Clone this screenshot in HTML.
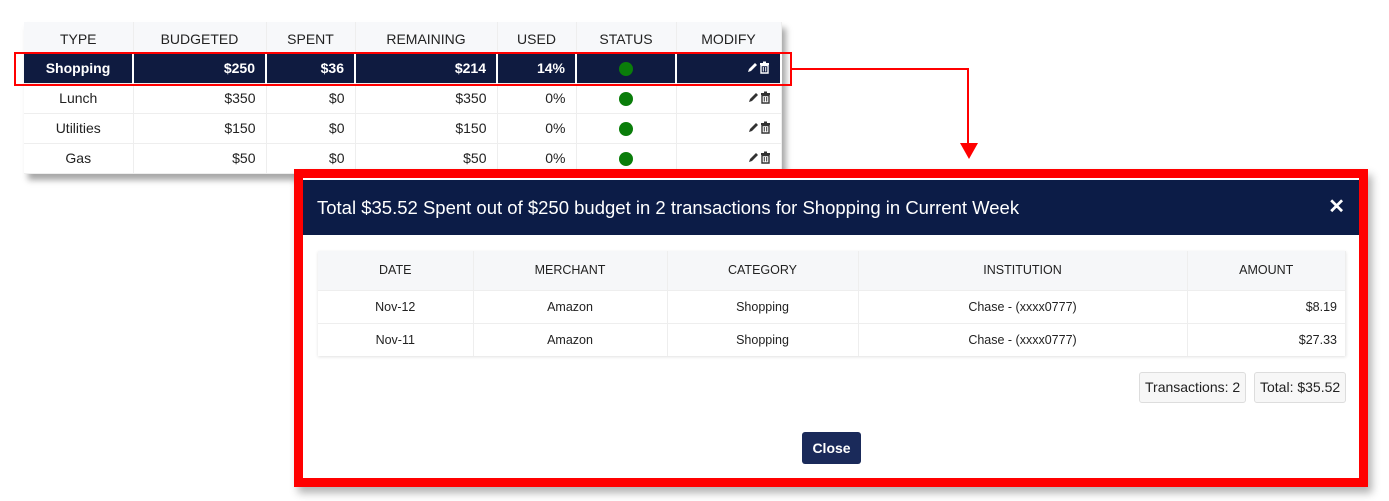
<!DOCTYPE html>
<html><head><meta charset="utf-8"><style>
*{box-sizing:border-box;margin:0;padding:0}
body{width:1389px;height:501px;background:#fff;position:relative;overflow:hidden;font-family:"Liberation Sans",sans-serif;color:#222}
.tbl{position:absolute;left:24px;top:22px;width:758px;border-collapse:collapse;box-shadow:4px 6px 6px rgba(0,0,0,.35);background:#fff;font-size:14px}
.tbl td,.tbl th{height:30px;padding:0 10px;border-right:1px solid #eee;border-bottom:1px solid #eee}
.tbl th{font-weight:normal;background:#f7f8fa;height:31px;padding-top:3px}
.tbl td.r{text-align:right}.tbl td.c,.tbl th{text-align:center}
.tbl tr.sel td{background:#0f1b40;color:#fff;font-weight:bold;border-right:2px solid #fff}
.dot{display:inline-block;width:14px;height:14px;border-radius:50%;background:#0a7d0a;vertical-align:middle}
.abs{position:absolute}
.modal{position:absolute;left:294px;top:169px;width:1074px;height:318px;border:9px solid #ff0000;background:#fff;box-shadow:4px 6px 8px rgba(0,0,0,.3)}
.mh{position:absolute;left:0;top:2px;right:0;height:55px;background:#0c1c47;color:#fff;font-size:18.5px;padding:17px 0 0 14px}
.mh .x{position:absolute;right:14px;top:14px;font-weight:bold;font-size:20px}
.mt{position:absolute;left:15px;top:73px;width:1028px;border-collapse:collapse;font-size:12.5px;box-shadow:0 1px 3px rgba(0,0,0,.12)}
.mt th{font-weight:normal;height:39px;background:#f6f7f9;border-right:1px solid #eee;text-align:center}
.mt td{height:33px;border-top:1px solid #eee;border-right:1px solid #eee;text-align:center}
.badge{position:absolute;top:194px;height:31px;border:1px solid #ddd;border-radius:3px;background:#f7f7f7;font-size:14px;padding:6px 5px}
.btn{position:absolute;left:499px;top:254px;width:59px;height:32px;background:#1a2a5a;border-radius:3px;color:#fff;font-size:14px;text-align:center;line-height:32px;font-weight:bold}
</style></head><body>
<svg width="0" height="0" style="position:absolute"><defs>
<g id="ic"><path d="M1 12 L2 9 L8 3 L10 5 L4 11 Z" fill="currentColor"/><rect x="13" y="3" width="9" height="2" fill="currentColor"/><rect x="16" y="1.5" width="3" height="2" fill="currentColor"/><path d="M14 5.5 h7 v7.5 h-7 Z" fill="none" stroke="currentColor" stroke-width="1.4"/><path d="M16.3 7v4.5M18.7 7v4.5" stroke="currentColor" stroke-width="1"/></g>
</defs></svg>
<table class="tbl">
<tr><th style="width:109px">TYPE</th><th style="width:133px">BUDGETED</th><th style="width:89px">SPENT</th><th style="width:142px">REMAINING</th><th style="width:79px">USED</th><th style="width:100px">STATUS</th><th>MODIFY</th></tr>
<tr class="sel"><td class="c">Shopping</td><td class="r">$250</td><td class="r">$36</td><td class="r">$214</td><td class="r">14%</td><td class="c"><span class="dot"></span></td><td class="r" style="color:#fff"><svg width="23" height="14"><use href="#ic"/></svg></td></tr>
<tr><td class="c">Lunch</td><td class="r">$350</td><td class="r">$0</td><td class="r">$350</td><td class="r">0%</td><td class="c"><span class="dot"></span></td><td class="r" style="color:#333"><svg width="23" height="14"><use href="#ic"/></svg></td></tr>
<tr><td class="c">Utilities</td><td class="r">$150</td><td class="r">$0</td><td class="r">$150</td><td class="r">0%</td><td class="c"><span class="dot"></span></td><td class="r" style="color:#333"><svg width="23" height="14"><use href="#ic"/></svg></td></tr>
<tr><td class="c">Gas</td><td class="r">$50</td><td class="r">$0</td><td class="r">$50</td><td class="r">0%</td><td class="c"><span class="dot"></span></td><td class="r" style="color:#333"><svg width="23" height="14"><use href="#ic"/></svg></td></tr>
</table>
<div class="abs" style="left:14px;top:52px;width:778px;height:34px;border:2px solid #f00"></div>
<div class="abs" style="left:792px;top:68px;width:177px;height:2px;background:#f00"></div>
<div class="abs" style="left:967px;top:68px;width:2px;height:78px;background:#f00"></div>
<svg class="abs" style="left:960px;top:143px" width="18" height="16"><polygon points="0,0 18,0 9,16" fill="#f00"/></svg>
<div class="modal">
<div class="mh">Total $35.52 Spent out of $250 budget in 2 transactions for Shopping in Current Week<span class="x">✕</span></div>
<table class="mt">
<tr><th style="width:155px">DATE</th><th style="width:194px">MERCHANT</th><th style="width:191px">CATEGORY</th><th style="width:329px">INSTITUTION</th><th>AMOUNT</th></tr>
<tr><td>Nov-12</td><td>Amazon</td><td>Shopping</td><td>Chase - (xxxx0777)</td><td style="text-align:right;padding-right:8px">$8.19</td></tr>
<tr><td>Nov-11</td><td>Amazon</td><td>Shopping</td><td>Chase - (xxxx0777)</td><td style="text-align:right;padding-right:8px">$27.33</td></tr>
</table>
<div class="badge" style="left:836px">Transactions: 2</div>
<div class="badge" style="left:951px">Total: $35.52</div>
<div class="btn">Close</div>
</div>
</body></html>
